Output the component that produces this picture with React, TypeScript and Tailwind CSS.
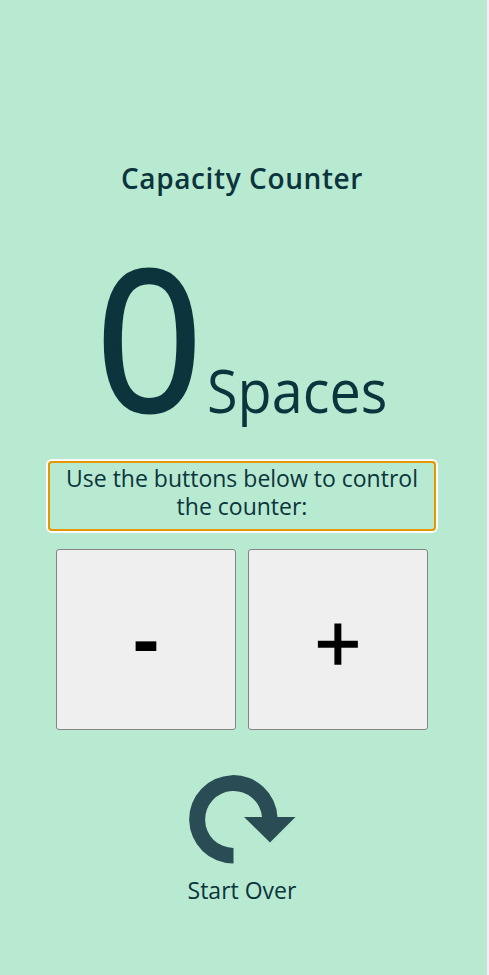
import React from "react";

export default function App() {
  return (
    <div className="flex h-[975px] w-[489px] overflow-hidden bg-[#b8ead1] font-['Open_Sans','Noto_Sans',sans-serif] text-[#0c343d]">
      <main className="flex w-[486px] shrink-0 flex-col items-center pr-[2px]">
        <h1 className="mt-[158px] h-10 text-[28px] leading-10 font-semibold tracking-[0.6px] whitespace-nowrap">Capacity Counter</h1>
        <div className="mt-[34px] flex h-[227px] items-baseline justify-center pr-[6px] whitespace-nowrap">
          <span className="scale-x-95 text-[197px] leading-[205px] [-webkit-text-stroke:3px_#0c343d]">0</span>
          <span className="mr-[-15px] origin-left translate-x-[1px] translate-y-[2px] scale-x-[0.93] text-[60px] leading-[70px]">Spaces</span>
        </div>
        <div className="flex h-[74px] w-[392px] rounded-md border-2 border-[#fdfefd]">
          <p className="flex-1 rounded border-2 border-[#e59700] pt-[1px] text-center text-[23px] leading-7">
            <span className="inline-block whitespace-nowrap">Use the buttons below to control</span>
            <br />
            <span className="inline-block whitespace-nowrap">the counter:</span>
          </p>
        </div>
        <div className="mt-[16px] flex gap-[12px] text-black">
          <button className="flex h-[181px] w-[180px] items-center justify-center rounded-[3px] border border-[#858585] bg-[#efefef] pb-[6px] text-[79px] leading-none font-bold">-</button>
          <button className="flex h-[181px] w-[180px] items-center justify-center rounded-[3px] border border-[#858585] bg-[#efefef] pt-[3px] text-[82px] leading-none [-webkit-text-stroke:1.5px_#000]">+</button>
        </div>
        <button className="mt-[44px] flex flex-col items-center">
          <svg className="h-[90px] w-[108px]" viewBox="188 774 108 90" fill="#2a4d55">
            <path d="M233.5 863.5A44.2 44.2 0 1 1 277.5 817H295.5L270 842.5L244 817H262A28.5 28.5 0 1 0 233.5 848Z" />
          </svg>
          <span className="mt-[10px] text-[23px] leading-8 whitespace-nowrap">Start Over</span>
        </button>
      </main>
      <div className="w-[3px] shrink-0 border-l border-[#d5dcdb] bg-[#f1eff2]" />
    </div>
  );
}
